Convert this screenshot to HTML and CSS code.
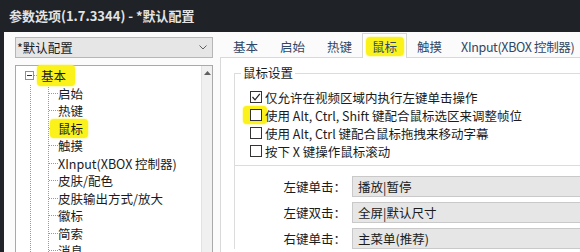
FILE: index.html
```html
<!DOCTYPE html>
<html lang="zh-CN">
<head>
<meta charset="utf-8">
<title>参数选项</title>
<link rel="stylesheet" href="styles.css">
</head>
<body>
<div class="window">
  <div class="titlebar">参数选项(1.7.3344) - *默认配置</div>
  <div class="body">
    <div class="left">
      <div class="select">
        <span class="select-text">*默认配置</span>
        <svg class="chevron" width="8" height="5" viewBox="0 0 8 5"><polyline points="0.5,0.5 4,4 7.5,0.5" fill="none" stroke="#606060" stroke-width="1"/></svg>
      </div>
      <div class="tree">
        <div class="tree-items">
          <div class="root-row">
            <svg class="expander" width="9" height="9" viewBox="0 0 9 9"><rect x="0.5" y="0.5" width="8" height="8" fill="#fff" stroke="#8f8f8f"/><line x1="2" y1="4.5" x2="7" y2="4.5" stroke="#333"/></svg>
            <span class="dash"></span>
            <span class="hl hl-root">基本</span>
          </div>
          <div class="branch">
            <ul class="kids">
              <li><span class="conn"></span>启始</li>
              <li><span class="conn"></span>热键</li>
              <li><span class="conn"></span><span class="hl hl-kid">鼠标</span></li>
              <li><span class="conn"></span>触摸</li>
              <li><span class="conn"></span>XInput(XBOX 控制器)</li>
              <li><span class="conn"></span>皮肤/配色</li>
              <li><span class="conn"></span>皮肤输出方式/放大</li>
              <li><span class="conn"></span>徽标</li>
              <li><span class="conn"></span>简索</li>
              <li><span class="conn"></span>消息</li>
            </ul>
          </div>
        </div>
        <div class="scrollbar">
          <svg class="arrow" width="7" height="4" viewBox="0 0 7 4"><polygon points="0,4 3.5,0 7,4" fill="#606060"/></svg>
        </div>
      </div>
    </div>
    <div class="right">
      <div class="tabs">
        <span class="tab">基本</span>
        <span class="tab">启始</span>
        <span class="tab">热键</span>
        <span class="tab active"><span class="hl hl-tab">鼠标</span></span>
        <span class="tab">触摸</span>
        <span class="tab tab-x">XInput(XBOX 控制器)</span>
      </div>
      <div class="panel">
        <fieldset class="group">
          <legend>鼠标设置</legend>
          <div class="check-row"><span class="box"><svg width="10" height="10" viewBox="0 0 10 10"><polyline points="1.5,5 4,7.8 8.8,1.8" fill="none" stroke="#222" stroke-width="1.2"/></svg></span>仅允许在视频区域内执行左键单击操作</div>
          <div class="check-row"><span class="hl-box"><span class="box"></span></span>使用 Alt, Ctrl, Shift 键配合鼠标选区来调整帧位</div>
          <div class="check-row"><span class="box"></span>使用 Alt, Ctrl 键配合鼠标拖拽来移动字幕</div>
          <div class="check-row"><span class="box"></span>按下 X 键操作鼠标滚动</div>
        </fieldset>
        <div class="actions">
          <div class="action-row"><span class="action-label">左键单击：</span><div class="combo">播放|暂停</div></div>
          <div class="action-row"><span class="action-label">左键双击：</span><div class="combo">全屏|默认尺寸</div></div>
          <div class="action-row"><span class="action-label">右键单击：</span><div class="combo">主菜单(推荐)</div></div>
        </div>
      </div>
    </div>
  </div>
</div>
</body>
</html>
```
FILE: styles.css
```css
html, body {
  margin: 0;
  padding: 0;
  background: #fbfbfb;
}
.window {
  width: 580px;
  height: 252px;
  overflow: hidden;
  font-family: "Noto Sans CJK SC", "Noto Sans", sans-serif;
  font-size: 12.5px;
  color: #1b1b1b;
}
.titlebar {
  height: 32px;
  line-height: 31px;
  padding-left: 9px;
  background: #1f2227;
  color: #e3e3e3;
  font-size: 13px;
  font-weight: 700;
  white-space: nowrap;
}
.body {
  display: flex;
  height: 220px;
  border-left: 4px solid #1f2227;
  background: #fbfbfb;
}
.left {
  width: 198px;
  flex: none;
  margin-left: 11px;
  padding-top: 5px;
  display: flex;
  flex-direction: column;
  gap: 7px;
}
.select {
  height: 21px;
  box-sizing: border-box;
  border: 1px solid #b6b6b6;
  background: #e6e6e6;
  display: flex;
  align-items: center;
  justify-content: space-between;
  padding: 0 5px 0 1px;
  line-height: 19px;
}
.chevron { display: block; }
.tree {
  height: 200px;
  flex: none;
  border: 1px solid #a9a9a9;
  background: #fff;
  display: flex;
}
.tree-items {
  flex: 1;
  padding-top: 1px;
}
.root-row {
  height: 17.5px;
  display: flex;
  align-items: center;
  padding-left: 9px;
}
.expander { display: block; flex: none; }
.dash {
  width: 5px;
  border-top: 1px dotted #9a9a9a;
  margin-right: 2px;
}
.hl {
  background: #fbf21c;
  border-radius: 4px;
  box-shadow: 0 0 2px #fbf21c;
}
.hl-root {
  padding: 1px 9px 1px 4px;
  margin: 0 -9px 0 -4px;
}
.hl-kid {
  padding: 0 5px 0 8px;
  margin: 0 -5px 0 -8px;
}
.hl-tab {
  padding: 0 7px 0 6px;
  margin: 0 -7px 0 -6px;
}
.branch {
  margin-left: 14px;
  border-left: 1px dotted #9a9a9a;
  padding-left: 17px;
}
.kids {
  list-style: none;
  margin: 0;
  padding: 0;
  border-left: 1px dotted #9a9a9a;
}
.kids li {
  height: 17.5px;
  display: flex;
  align-items: center;
  white-space: nowrap;
}
.conn {
  width: 9px;
  flex: none;
  border-top: 1px dotted #9a9a9a;
}
.scrollbar {
  width: 10px;
  flex: none;
  border-left: 1px solid #e2e2e2;
  background: #f0f0f0;
  display: flex;
  justify-content: center;
  padding-top: 5px;
  box-sizing: content-box;
}
.arrow { display: block; }
.right {
  flex: 1;
  min-width: 0;
  margin-left: 7px;
  display: flex;
  flex-direction: column;
}
.tabs {
  height: 24px;
  margin-top: 1px;
  padding-left: 2px;
  display: flex;
  align-items: flex-end;
  white-space: nowrap;
}
.tab {
  height: 21px;
  line-height: 21px;
  padding: 0 11px;
  color: #2f4867;
  flex: none;
}
.tab-x {
  padding-left: 8px;
  letter-spacing: -0.35px;
}
.tab.active {
  height: 25px;
  box-sizing: border-box;
  border: 1px solid #d6d6d6;
  border-bottom: none;
  background: #fff;
  padding: 2px 9px 0;
  margin: 0 -1px -1px;
  position: relative;
  z-index: 1;
}
.panel {
  width: 600px;
  border-top: 1px solid #d9d9d9;
  border-left: 1px solid #d9d9d9;
  background: #fff;
  padding: 7px 0 0 13px;
  flex: 1;
}
.group {
  width: 480px;
  margin: 0;
  border: 1px solid #dcdcdc;
  padding: 7px 0 5px 15px;
}
.group legend {
  padding: 0 2px;
  margin-left: -9px;
  line-height: 16px;
}
.check-row {
  height: 18px;
  display: flex;
  align-items: center;
  white-space: nowrap;
}
.box {
  width: 12px;
  height: 12px;
  box-sizing: border-box;
  border: 1px solid #333;
  background: #fff;
  margin-right: 3px;
  flex: none;
  display: flex;
  align-items: center;
  justify-content: center;
}
.box svg { display: block; }
.hl-box {
  display: flex;
  padding: 3px 2px 3px 7px;
  margin: -3px -2px -3px -7px;
  background: #fbf21c;
  border-radius: 4px;
  box-shadow: 0 0 2px #fbf21c;
}
.actions {
  border-left: 1px solid #dcdcdc;
  padding-top: 10px;
  display: flex;
  flex-direction: column;
  gap: 5px;
}
.action-row {
  height: 21px;
  display: flex;
  align-items: center;
}
.action-label {
  width: 111px;
  text-align: right;
  margin-right: 6px;
  white-space: nowrap;
}
.combo {
  width: 300px;
  height: 21px;
  box-sizing: border-box;
  border: 1px solid #c9c9c9;
  background: #e6e6e6;
  padding-left: 5px;
  line-height: 19px;
}
```
